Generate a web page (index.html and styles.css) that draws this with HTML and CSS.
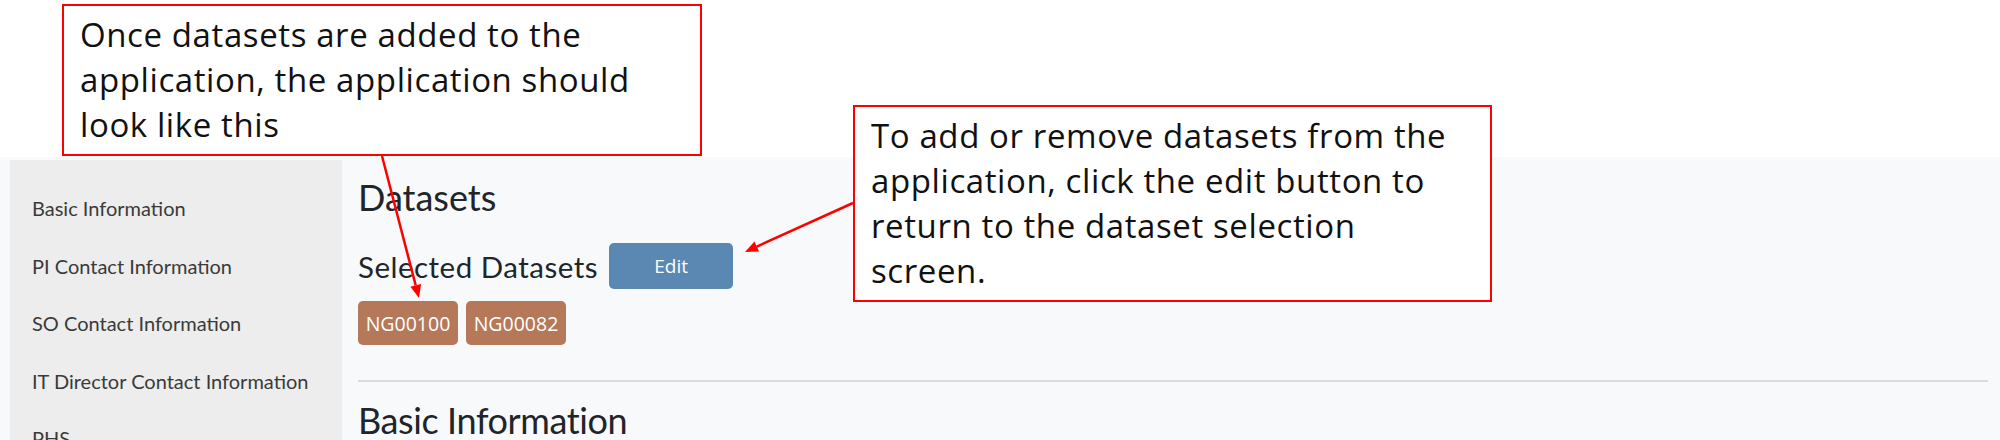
FILE: index.html
```html
<!DOCTYPE html>
<html lang="en">
<head>
<meta charset="utf-8">
<title>Datasets – application</title>
<link rel="stylesheet" href="styles.css">
</head>
<body>
<div class="canvas">
  <div class="app">
    <nav class="sidebar">
      <a class="nav-item">Basic Information</a>
      <a class="nav-item">PI Contact Information</a>
      <a class="nav-item">SO Contact Information</a>
      <a class="nav-item">IT Director Contact Information</a>
      <a class="nav-item">PHS</a>
    </nav>
    <main class="content">
      <h2 class="section-title">Datasets</h2>
      <div class="selected-row">
        <h3 class="sub-title">Selected Datasets</h3>
        <button class="btn-edit" type="button">Edit</button>
      </div>
      <div class="badges">
        <span class="badge">NG00100</span>
        <span class="badge">NG00082</span>
      </div>
      <hr class="divider">
      <h2 class="section-title section-next">Basic Information</h2>
    </main>
  </div>

  <div class="callout callout-top">Once datasets are added to the<br>application, the application should<br>look like this</div>
  <div class="callout callout-right">To add or remove datasets from the<br>application, click the edit button to<br>return to the dataset selection<br>screen.</div>

  <svg class="arrows" width="2000" height="440" viewBox="0 0 2000 440" aria-hidden="true">
    <line x1="382" y1="156" x2="415.7" y2="285.4" stroke="#ff0000" stroke-width="2.5"/>
    <polygon points="419,298 410.4,286.8 421.1,284.0" fill="#ff0000"/>
    <line x1="853" y1="203" x2="756.8" y2="246.6" stroke="#ff0000" stroke-width="2.5"/>
    <polygon points="745,252 754.5,241.6 759.1,251.6" fill="#ff0000"/>
  </svg>
</div>
</body>
</html>
```

FILE: styles.css
```css
html, body {
  margin: 0;
  padding: 0;
  background: #ffffff;
}

.canvas {
  position: relative;
  width: 2000px;
  height: 440px;
  overflow: hidden;
  padding-top: 157px;
  box-sizing: border-box;
}

.app {
  display: flex;
  align-items: flex-start;
  height: 283px;
  padding-left: 10px;
  background: #f8f9fa;
}

.sidebar {
  width: 332px;
  flex: none;
  align-self: stretch;
  margin-top: 3px;
  padding-top: 20px;
  background: #ededed;
}

.nav-item {
  display: block;
  padding-left: 22px;
  font-family: Lato, "Open Sans", sans-serif;
  font-size: 20px;
  line-height: 57.5px;
  color: #3a3a3a;
  white-space: nowrap;
}

.content {
  flex: 1;
  padding: 19px 12px 0 16px;
  color: #212529;
  font-family: Lato, "Open Sans", sans-serif;
}

.section-title {
  margin: 0;
  font-size: 36px;
  line-height: 43px;
  font-weight: 400;
}

.section-next {
  margin-top: 17px;
  letter-spacing: -0.4px;
}

.selected-row {
  display: flex;
  align-items: center;
  gap: 11px;
  margin-top: 24px;
}

.sub-title {
  margin: 0;
  font-size: 29.5px;
  line-height: 35px;
  font-weight: 400;
  letter-spacing: 0.5px;
}

.btn-edit {
  width: 124px;
  height: 46px;
  border: 0;
  border-radius: 5px;
  background: #5b88b3;
  color: #ffffff;
  font-family: "Open Sans", sans-serif;
  font-size: 19px;
  padding: 0;
}

.badges {
  display: flex;
  gap: 8px;
  margin-top: 12px;
}

.badge {
  display: flex;
  align-items: center;
  justify-content: center;
  min-width: 100px;
  height: 44px;
  box-sizing: border-box;
  padding: 0 7px;
  border-radius: 5px;
  background: #b5795a;
  color: #ffffff;
  font-family: "Open Sans", sans-serif;
  font-size: 19.5px;
}

.divider {
  margin: 35px 0 0;
  border: 0;
  height: 2px;
  background: #dadbdc;
}

.callout {
  position: absolute;
  box-sizing: border-box;
  background: #ffffff;
  border: 2px solid #ff0000;
  padding: 6px 16px 8px;
  font-family: "Open Sans", sans-serif;
  font-size: 33px;
  line-height: 45px;
  letter-spacing: 0.6px;
  color: #111111;
  white-space: nowrap;
}

.callout-top {
  left: 62px;
  top: 4px;
  width: 640px;
  height: 152px;
}

.callout-right {
  left: 853px;
  top: 105px;
  width: 639px;
  height: 197px;
}

.arrows {
  position: absolute;
  left: 0;
  top: 0;
  pointer-events: none;
}
```
